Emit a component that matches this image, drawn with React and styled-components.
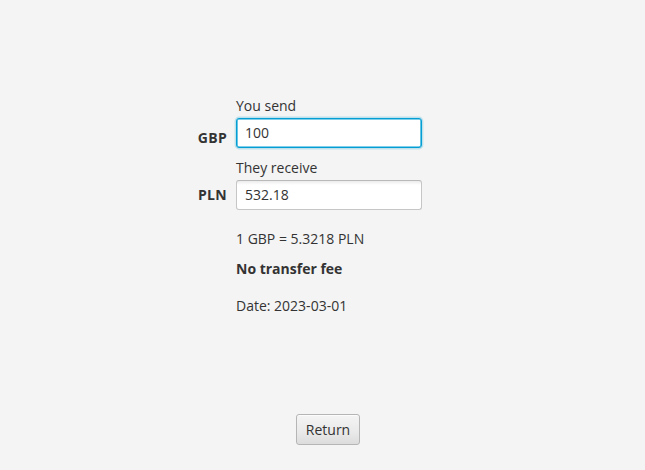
import React from "react";
import styled, { createGlobalStyle } from "styled-components";

const GlobalStyle = createGlobalStyle`
  html, body {
    margin: 0;
    padding: 0;
    background: #f4f4f4;
  }
  body {
    font-family: "Open Sans", "Noto Sans", sans-serif;
    font-size: 14px;
    color: #333333;
  }
`;

const Page = styled.div`
  box-sizing: border-box;
  height: 470px;
  padding-top: 96px;
  display: flex;
  flex-direction: column;
`;

// two columns: currency code on the left, fields on the right
const Form = styled.div`
  display: grid;
  grid-template-columns: 227px 186px;
  column-gap: 9px;
  align-items: center;
`;

const Caption = styled.div`
  grid-column: 2;
  line-height: 20px;
  margin-bottom: 1.5px;
`;

const Currency = styled.div`
  grid-column: 1;
  justify-self: end;
  font-weight: 700;
  line-height: 20px;
  letter-spacing: 0.3px;
`;

const Field = styled.input`
  grid-column: 2;
  box-sizing: border-box;
  width: 186px;
  height: 30px;
  margin: 0 0 ${(p) => (p.$last ? "0" : "10.5px")} 0;
  padding: 0 8px;
  font-family: inherit;
  font-size: 14px;
  color: #333333;
  border-radius: 3px;
  outline: none;
  border: 1px solid ${(p) => (p.$focused ? "#039ed3" : "#c6c6c6")};
  border-top-color: ${(p) => (p.$focused ? "#039ed3" : "#b9b9b9")};
  background: ${(p) =>
    p.$focused
      ? "#ffffff"
      : "linear-gradient(to bottom, #ebebeb 0px, #ffffff 4px)"};
  box-shadow: ${(p) =>
    p.$focused
      ? "inset 0 0 0 0.6px #039ed3, 0 0 0 1.4px rgba(3, 158, 211, 0.22)"
      : "none"};
`;

const Info = styled.div`
  display: flex;
  flex-direction: column;
  padding-left: 236px;
  margin-top: 19px;
`;

const Line = styled.div`
  line-height: 20px;
  font-weight: ${(p) => (p.$bold ? 700 : 400)};
  margin-bottom: ${(p) => p.$gap || 0}px;
`;

const Footer = styled.div`
  margin-top: auto;
  padding-left: 296px;
  padding-bottom: 25px;
  display: flex;
`;

const Button = styled.button`
  box-sizing: border-box;
  width: 64px;
  height: 31px;
  padding: 0;
  font-family: inherit;
  font-size: 14px;
  color: #333333;
  border: 1px solid #b5b5b5;
  border-radius: 3px;
  background: linear-gradient(to bottom, #f4f4f4 0%, #e9e9e9 60%, #dcdcdc 100%);
  box-shadow: inset 0 1px 0 rgba(255, 255, 255, 0.7);
  cursor: pointer;
`;

const App = () => {
  return (
    <React.Fragment>
      <GlobalStyle />
      <Page>
        <Form>
          <Caption>You send</Caption>
          <Currency>GBP</Currency>
          <Field $focused defaultValue="100" />
          <Caption>They receive</Caption>
          <Currency>PLN</Currency>
          <Field $last defaultValue="532.18" />
        </Form>
        <Info>
          <Line $gap={10}>1 GBP = 5.3218 PLN</Line>
          <Line $bold $gap={17}>No transfer fee</Line>
          <Line>Date: 2023-03-01</Line>
        </Info>
        <Footer>
          <Button>Return</Button>
        </Footer>
      </Page>
    </React.Fragment>
  );
};

export default App;
